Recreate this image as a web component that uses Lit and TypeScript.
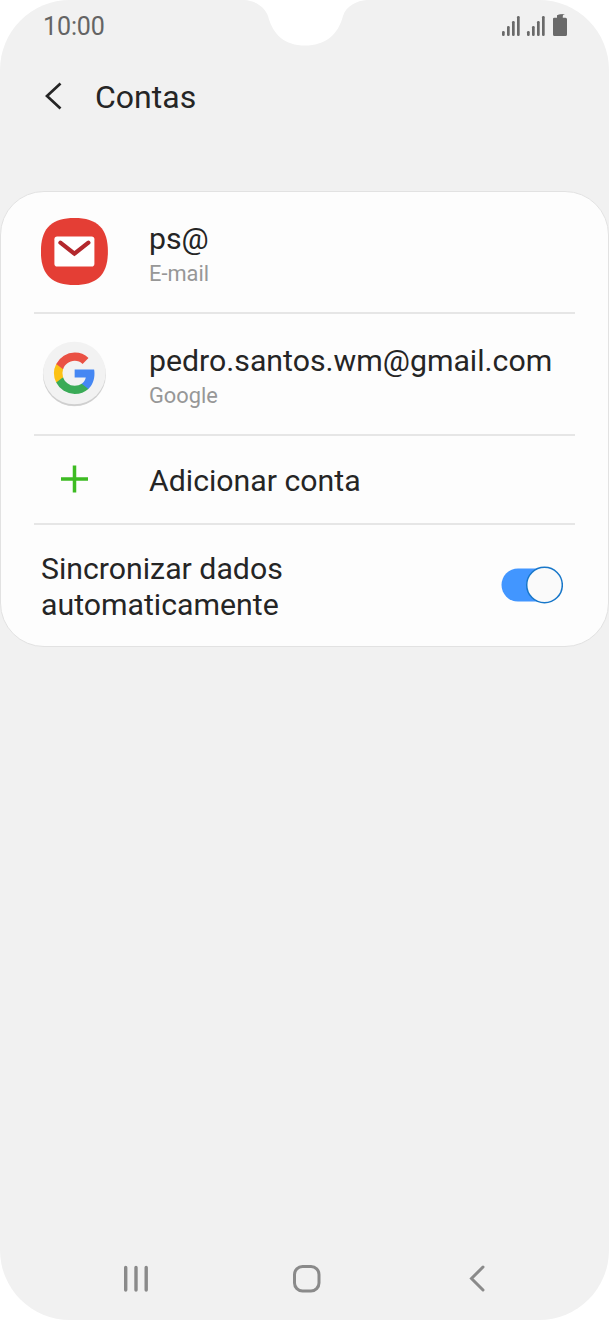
// src/accounts-screen.ts
import { LitElement, html, css, svg } from 'lit';
import { customElement, property, state } from 'lit/decorators.js';

@customElement('status-bar')
export class StatusBar extends LitElement {
  static styles = css`
    :host {
      display: flex;
      justify-content: space-between;
      height: 52px;
      box-sizing: border-box;
      padding: 11px 41px 0 43px;
      color: #646464;
    }
    .time {
      font-size: 25px;
      line-height: 31px;
      letter-spacing: -0.1px;
    }
    .icons {
      display: block;
      width: 68px;
      height: 28px;
    }
  `;

  @property({ type: String })
  time = '10:00';

  render() {
    return html`
      <div class="time">${this.time}</div>
      <svg class="icons" viewBox="500 11 68 28" fill="#6a6a6a">
        ${[502, 527].map((x) => svg`
          <rect x=${x} y="31" width="2.7" height="5" rx="1.2" />
          <rect x=${x + 5} y="26" width="2.7" height="10" rx="1.2" />
          <rect x=${x + 10} y="21" width="2.7" height="15" rx="1.2" />
          <rect x=${x + 15} y="16" width="2.7" height="20" rx="1.2" />
        `)}
        <path d="M554.2 17.8H557V15.3Q559 14 565 14Q562.8 14.8 562.8 15.8V17.8H565.5Q567 17.8 567 19.3V34.5Q567 36 565.5 36H554.5Q553 36 553 34.5V19Q553 17.8 554.2 17.8Z" />
      </svg>
    `;
  }
}

@customElement('toggle-switch')
export class ToggleSwitch extends LitElement {
  static styles = css`
    :host {
      display: block;
      width: 62px;
      height: 38px;
    }
    svg {
      display: block;
    }
  `;

  @property({ type: Boolean })
  checked = false;

  render() {
    return html`
      <svg width="62" height="38" viewBox="0 0 62 38">
        <rect x="0.5" y="2.5" width="58" height="33" rx="16.5" fill=${this.checked ? '#4296ff' : '#c8c8c8'} />
        <circle cx=${this.checked ? 43.5 : 18.8} cy="19" r="17.8" fill="#fafafa" stroke="#1877c9" stroke-width="1.5" />
      </svg>
    `;
  }
}

@customElement('app-root')
export class AppRoot extends LitElement {
  static styles = css`
    :host {
      display: block;
      background-color: #ffffff;
      font-family: Roboto, sans-serif;
      color: #252525;
    }
    svg {
      display: block;
    }
    .screen {
      position: relative;
      display: flex;
      flex-direction: column;
      width: 609px;
      height: 1320px;
      border-radius: 70px;
      overflow: hidden;
      background-color: #f1f1f1;
    }
    .notch {
      position: absolute;
      top: 0;
      left: 240px;
    }
    .header {
      display: flex;
      height: 139px;
      box-sizing: border-box;
      padding: 26px 0 0 44px;
      gap: 33px;
    }
    .back {
      margin-top: 4px;
    }
    .title {
      font-size: 32px;
      line-height: 38px;
    }
    .card {
      box-sizing: border-box;
      height: 456px;
      border: 1px solid #e2e2e2;
      border-radius: 44px;
      background-color: #fdfdfd;
      padding: 0 33px;
    }
    .row {
      display: flex;
      align-items: center;
      box-sizing: border-box;
      height: 122px;
      padding: 0 7px;
      border-bottom: 2px solid #e6e6e6;
    }
    .row.short {
      height: 89px;
    }
    .row.last {
      height: 121px;
      justify-content: space-between;
      padding-right: 12px;
      border-bottom: none;
    }
    .icon {
      width: 68px;
      margin-right: 40px;
    }
    .text {
      padding-top: 4px;
    }
    .label {
      font-size: 30.25px;
      line-height: 36px;
      white-space: nowrap;
    }
    .short .label,
    .last .label {
      padding-top: 3px;
    }
    .detail {
      margin-top: 4px;
      font-size: 21.8px;
      line-height: 26px;
      color: #979797;
    }
    toggle-switch {
      margin-bottom: 2px;
    }
    .nav {
      display: flex;
      margin-top: auto;
      height: 82px;
      box-sizing: border-box;
      padding: 24px 121px 0 121px;
      justify-content: space-between;
    }
  `;

  @state()
  private sync = true;

  private emailIcon = html`
    <svg width="68" height="68" viewBox="0.6 0.5 68 68">
      <path fill="#e43e35" d="M34 .5C57 .5 67.5 11 67.5 34S57 67.5 34 67.5.5 57 .5 34 11 .5 34 .5Z" />
      <rect x="14" y="19" width="40" height="30" rx="2.8" fill="#fff" />
      <path d="M20 25.2L34 36.2L48 25.2" fill="none" stroke="#b3282d" stroke-width="4.2" stroke-linecap="round" />
    </svg>
  `;

  private googleIcon = html`
    <svg width="68" height="68" viewBox="0.6 0 68 68">
      <circle cx="34" cy="34.8" r="31.5" fill="#dedede" />
      <circle cx="34" cy="35" r="31" fill="#cfcfcf" />
      <circle cx="34" cy="33" r="31.3" fill="#f2f2f2" />
      <g transform="translate(13.2 12.6) scale(0.86)">
        <path fill="#4587f3" d="M47.53 24.55c0-1.63-.13-3.27-.42-4.87H24.48v9.24h12.97c-.54 2.99-2.25 5.63-4.77 7.31v6h7.73c4.55-4.2 7.12-10.38 7.12-17.68Z" />
        <path fill="#3aab57" d="M24.48 48c6.48 0 11.93-2.13 15.93-5.77l-7.73-6c-2.15 1.46-4.93 2.29-8.2 2.29-6.27 0-11.58-4.23-13.48-9.92H3.03v6.18A24 24 0 0 0 24.48 48Z" />
        <path fill="#fcc114" d="M11 28.6a14.4 14.4 0 0 1 0-9.2v-6.18H3.03a24 24 0 0 0 0 21.56Z" />
        <path fill="#ea5144" d="M24.48 9.5c3.44-.06 6.74 1.24 9.23 3.62l6.86-6.85A23 23 0 0 0 24.48 0 24 24 0 0 0 3.03 13.22L11 19.4c1.9-5.69 7.21-9.9 13.48-9.9Z" />
      </g>
    </svg>
  `;

  private addIcon = html`
    <svg width="68" height="30" viewBox="0.5 0 68 30">
      <path d="M34 0.5V27.5M20.5 14H47.5" stroke="#3dbb22" stroke-width="3.5" />
    </svg>
  `;

  private renderAccount(icon: unknown, name: string, type: string) {
    return html`
      <div class="row">
        <div class="icon">${icon}</div>
        <div class="text">
          <div class="label">${name}</div>
          <div class="detail">${type}</div>
        </div>
      </div>
    `;
  }

  render() {
    return html`
      <div class="screen">
        <svg class="notch" width="130" height="48" viewBox="240 0 130 48">
          <path fill="#fff" d="M244 0C255 .5 265 7 268 16C273 35 285 45.5 305 45.5S338 35 343 16C346 6 357 .5 367 0Z" />
        </svg>

        <status-bar></status-bar>

        <div class="header">
          <svg class="back" width="18" height="28" viewBox="0 0 18 28">
            <path d="M16.5 1.5L3 14L16.5 26.5" fill="none" stroke="#252525" stroke-width="2.7" />
          </svg>
          <div class="title">Contas</div>
        </div>

        <div class="card">
          ${this.renderAccount(this.emailIcon, 'ps@', 'E-mail')}
          ${this.renderAccount(this.googleIcon, 'pedro.santos.wm@gmail.com', 'Google')}
          <div class="row short">
            <div class="icon">${this.addIcon}</div>
            <div class="label">Adicionar conta</div>
          </div>
          <div class="row last">
            <div class="label">Sincronizar dados<br />automaticamente</div>
            <toggle-switch .checked=${this.sync} @click=${() => (this.sync = !this.sync)}></toggle-switch>
          </div>
        </div>

        <div class="nav">
          <svg width="30" height="32" viewBox="0 0 30 32">
            <path d="M4.7 5.5V28M15 5.5V28M25.2 5.5V28" stroke="#8a8a8a" stroke-width="3.4" stroke-linecap="round" />
          </svg>
          <svg width="38" height="32" viewBox="0 0 38 32">
            <rect x="3.5" y="4.5" width="24.5" height="24.5" rx="8" fill="none" stroke="#8a8a8a" stroke-width="3" />
          </svg>
          <svg width="20" height="32" viewBox="0 0 20 32">
            <path d="M15 5L3.5 16.5L15 28" fill="none" stroke="#8a8a8a" stroke-width="3" stroke-linecap="round" />
          </svg>
        </div>
      </div>
    `;
  }
}
